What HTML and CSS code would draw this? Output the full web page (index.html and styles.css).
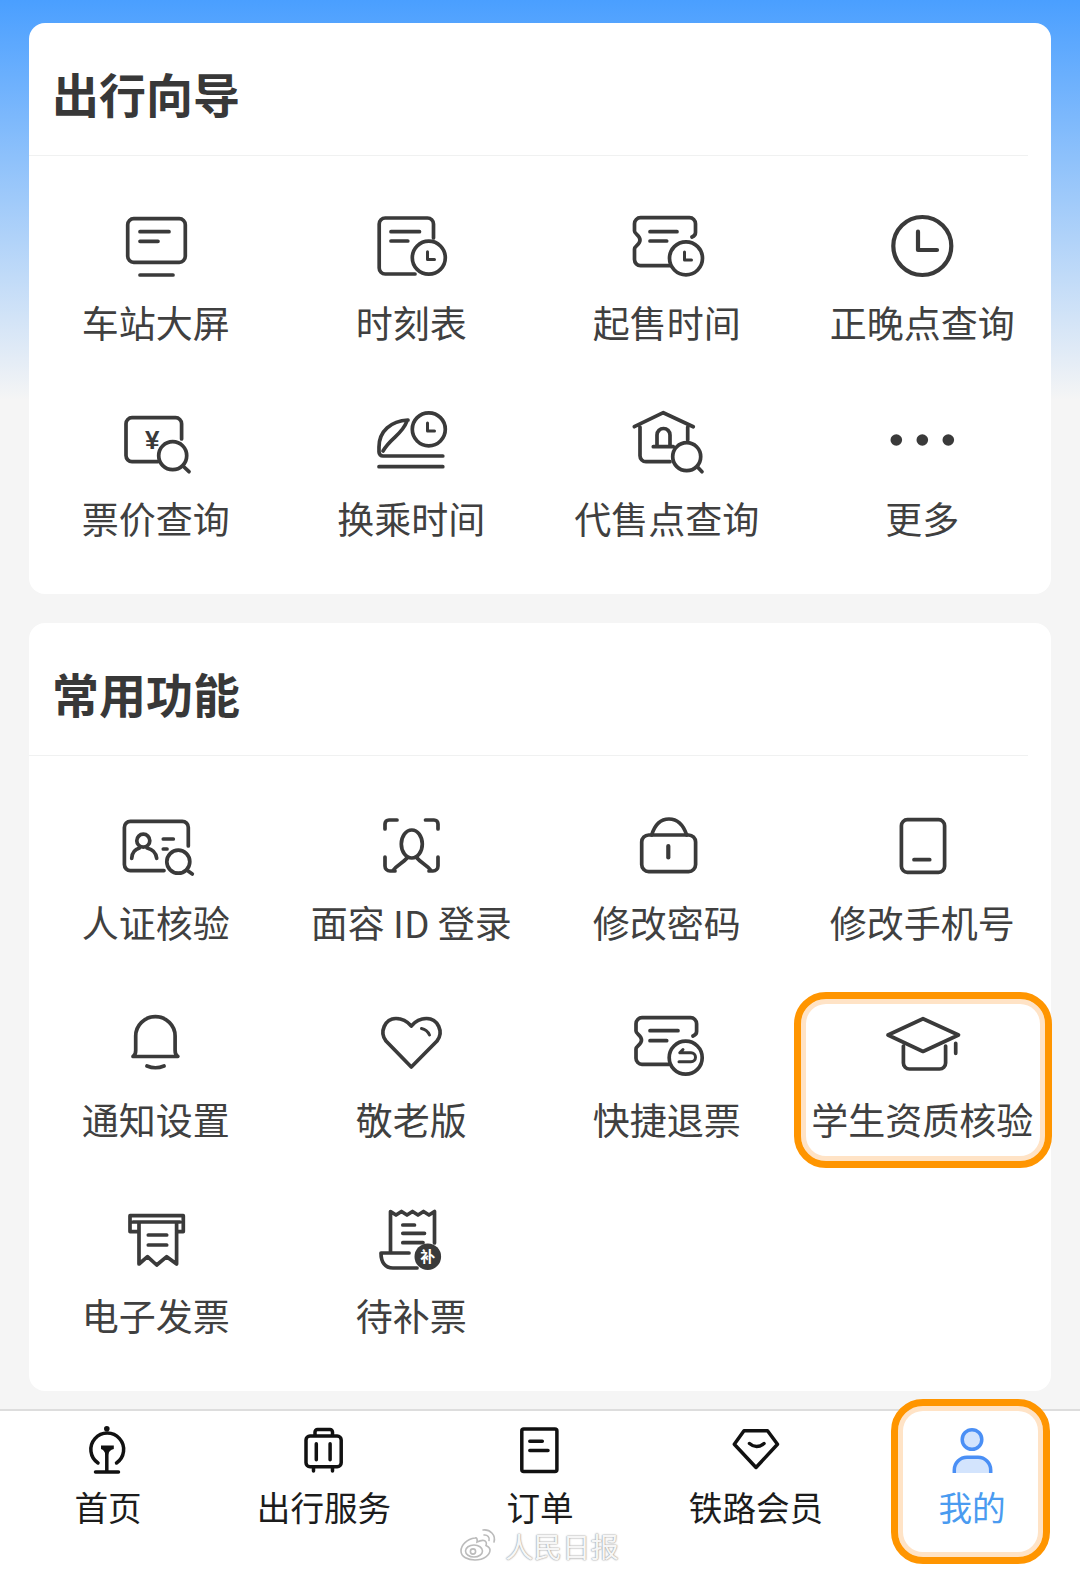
FILE: index.html
```html
<!DOCTYPE html>
<html lang="zh-CN">
<head>
<meta charset="utf-8">
<title>出行向导</title>
<link rel="stylesheet" href="styles.css">
</head>
<body>
<div class="page">
  <main class="main">
    <section class="card">
      <h2 class="card-title">出行向导</h2>
      <div class="grid">
        <div class="item"><svg class="ic" viewBox="0 0 80 80"><rect x="11.700" y="13.700" width="57.600" height="43.600" rx="6"/><path d="M24 26.700H53M24 36.300H42M24 70H57"/></svg><span class="label">车站大屏</span></div>
        <div class="item"><svg class="ic" viewBox="0 0 80 80"><path d="M62.500 33V19a6 6 0 0 0-6-6H14.200a6 6 0 0 0-6 6V63a6 6 0 0 0 6 6H44M20 26.700H48.500M20 36H36.800"/><circle cx="57.800" cy="52.700" r="16.500"/><path class="thin" d="M56.500 46.700V54.500H63.500"/></svg><span class="label">时刻表</span></div>
        <div class="item"><svg class="ic" viewBox="0 0 80 80"><path d="M65 32c2.500-1 3.500-2.500 3.500-4.500V18.700a6 6 0 0 0-6-6H13.500a6 6 0 0 0-6 6V26c0 3 5.500 4 5.500 9s-5.500 6-5.500 9V54.600a6 6 0 0 0 6 6H43M23 26.700H50M23 36H39.700"/><circle cx="59" cy="53.300" r="16.500"/><path class="thin" d="M57.500 47V55H64.500"/></svg><span class="label">起售时间</span></div>
        <div class="item"><svg class="ic" viewBox="0 0 80 80"><circle class="heavy" cx="40.300" cy="41" r="29"/><path class="bold" d="M36 26.700V45H55"/></svg><span class="label">正晚点查询</span></div>

        <div class="item"><svg class="ic" viewBox="0 0 80 80"><path d="M65.600 38V22.700a6 6 0 0 0-6-6H16a6 6 0 0 0-6 6V54.600a6 6 0 0 0 6 6H42"/><text class="yen" x="36.300" y="48" text-anchor="middle">¥</text><circle cx="56.700" cy="54.700" r="14"/><path d="M67.500 65.500L73 70.700"/></svg><span class="label">票价查询</span></div>
        <div class="item"><svg class="ic" viewBox="0 0 80 80"><circle cx="57.800" cy="28.300" r="16.500"/><path class="thin" d="M56.500 22V30H63.500"/><path d="M37 19C20 20 8 30 8 46V51a4 4 0 0 0 4 4H71.800M8 65.700H71.800M36 20C31 34 20 36 12 50"/></svg><span class="label">换乘时间</span></div>
        <div class="item"><svg class="ic" viewBox="0 0 80 80"><path d="M7.300 25.700L36.300 11.700L66.300 25.700M13 26V54.700a6 6 0 0 0 6 6H43M60.700 26V39M26.300 45.700H46.300M30 45V34a6.500 6.500 0 0 1 13 0V45"/><circle cx="59.700" cy="55.700" r="14"/><path d="M70.500 66L75 70.700"/></svg><span class="label">代售点查询</span></div>
        <div class="item"><svg class="ic" viewBox="0 0 80 80"><circle class="f" cx="14.300" cy="39" r="5.800"/><circle class="f" cx="40.300" cy="39" r="5.800"/><circle class="f" cx="66.300" cy="39" r="5.800"/></svg><span class="label">更多</span></div>
      </div>
    </section>

    <section class="card">
      <h2 class="card-title">常用功能</h2>
      <div class="grid grid-wide">
        <div class="item"><svg class="ic" viewBox="0 0 80 80"><path d="M72.300 41V22.400a6 6 0 0 0-6-6H14.400a6 6 0 0 0-6 6V59.600a6 6 0 0 0 6 6H48"/><circle cx="27.300" cy="35.700" r="6.500"/><path d="M15.700 53.300C16 47 20 44 23.500 43M31 43C35 44 40 47 40.700 53.300M47.300 34H57.300M47.300 44H51"/><circle cx="62.300" cy="56.700" r="11.500"/><path d="M70.700 65L76.300 69"/></svg><span class="label">人证核验</span></div>
        <div class="item"><svg class="ic" viewBox="0 0 80 80"><path d="M14 24V19a4 4 0 0 1 4-4H26M54.500 15H63a4 4 0 0 1 4 4V24M14 52V61a5 5 0 0 0 5 5H24M67 52V61a5 5 0 0 1-5 5H58M22 65.500C26 60 32 58 36 53M60 65.500C56 60 50 58 46 53"/><ellipse cx="40.800" cy="39" rx="10.500" ry="14"/></svg><span class="label">面容 ID 登录</span></div>
        <div class="item"><svg class="ic" viewBox="0 0 80 80"><rect x="14.700" y="30" width="53.900" height="36.600" rx="7"/><path d="M24.700 30C28 19 34 14 42 14C50 14 56 19 59.700 30"/><path class="bold" d="M41.300 41V52.500"/></svg><span class="label">修改密码</span></div>
        <div class="item"><svg class="ic" viewBox="0 0 80 80"><rect x="19.400" y="14.700" width="43.200" height="52.600" rx="6"/><path d="M32 54.700H47.700"/></svg><span class="label">修改手机号</span></div>

        <div class="item"><svg class="ic" viewBox="0 0 80 80"><path d="M17 54.500c2-1 2.700-3 2.700-6V34a19.700 19.300 0 0 1 39.400 0V48.500c0 3 .7 5 2.700 6ZM31 64Q39.500 67.500 48 64"/></svg><span class="label">通知设置</span></div>
        <div class="item"><svg class="ic" viewBox="0 0 80 80"><path d="M40.300 65L15 39C8 30 14 16.500 25 16.500C31 16.500 36 19 40.300 24C44.500 19 49.500 16.500 55.500 16.500C67 16.500 73 30 66 39Z"/><path class="thin" d="M50.500 26.500Q56 27.500 58.500 33"/></svg><span class="label">敬老版</span></div>
        <div class="item"><svg class="ic" viewBox="0 0 80 80"><path d="M66 34c2.500-1 3.600-2.500 3.600-4.500V21.700a6 6 0 0 0-6-6H15a6 6 0 0 0-6 6V29c0 3 5.500 4 5.500 9s-5.500 6-5.500 9V56.300a6 6 0 0 0 6 6H42M23 28.700H51M23 38.700H39.700"/><circle cx="58.700" cy="55.700" r="16.500"/><path class="thin" d="M56 47.500L52.800 50.800H64a4.500 4.500 0 0 1 0 9H52"/></svg><span class="label">快捷退票</span></div>
        <div class="item"><svg class="ic" viewBox="0 0 80 80"><path d="M6 33L41 16.700L76.500 33L41 49.500ZM21.400 44V61a6 6 0 0 0 6 6H57.600a6 6 0 0 0 6-6V44M73.700 41.300V51.300"/></svg><span class="label">学生资质核验</span><div class="focus focus-item"></div></div>

        <div class="item"><svg class="ic" viewBox="0 0 80 80"><path d="M23 33.600H14V17.700H67.300V33.600H60.600M17 24H64M23 24V66L31.500 58.700L40.700 67L50.700 58.700L60.600 66V24M32.300 37H50.700M32.300 47H50.700"/></svg><span class="label">电子发票</span></div>
        <div class="item"><svg class="ic" viewBox="0 0 80 80"><path d="M19.500 55V13.500l5.500 3.500l5.500-3.500l5.500 3.500l5.500-3.500l5.500 3.500l5.500-3.500l5.500 3.500l5.500-3.500V45M38 55H10C10 64 14 70 22 70H46M31.800 27H43.500M31.800 35.300H53.500M31.800 44.700H52"/><circle class="f" cx="56.800" cy="58.700" r="13.300"/><text class="bu" x="56.800" y="64" text-anchor="middle">补</text></svg><span class="label">待补票</span></div>
      </div>
    </section>
  </main>

  <nav class="tabs">
    <div class="tab"><svg class="tic" viewBox="0 0 60 60"><path d="M21 41A16.400 16.400 0 1 1 39.500 41M29.800 30V49M18.500 50H41.500"/><circle class="tf" cx="29.800" cy="6.800" r="2.800"/><path class="tf" d="M24 23.500H36.800V27Q32 28 31 33H28.600Q27.500 28 24 27Z"/></svg><span class="tab-label">首页</span></div>
    <div class="tab"><svg class="tic" viewBox="0 0 60 60"><rect x="13" y="14" width="35.200" height="30.800" rx="4"/><path d="M22 13V10a2.500 2.500 0 0 1 2.500-2.500H37a2.500 2.500 0 0 1 2.500 2.500V13M23.300 21.700V37.800M37.100 21.700V37.800M20.500 46V49M39.500 46V49"/></svg><span class="tab-label">出行服务</span></div>
    <div class="tab"><svg class="tic" viewBox="0 0 60 60"><rect x="12.800" y="7" width="35.100" height="42.400" rx="2"/><path d="M20.800 19.300H33.300M20.800 28.500H39"/></svg><span class="tab-label">订单</span></div>
    <div class="tab"><svg class="tic" viewBox="0 0 60 60"><path d="M19 8.800H42.500L52.500 22.300L31 45.500L9.300 22.300ZM24.500 21.500Q31.500 27.500 39 21.500"/></svg><span class="tab-label">铁路会员</span></div>
    <div class="tab tab-active"><svg class="tic tic-active" viewBox="0 0 60 60"><circle cx="30" cy="17.500" r="9.800"/><path d="M12.300 51V48a12.700 12.700 0 0 1 12.700-12.700H36a12.700 12.700 0 0 1 12.700 12.700V51"/></svg><span class="tab-label">我的</span><div class="focus focus-tab"></div></div>
    <div class="mark"><svg class="mark-logo" viewBox="0 0 40 36"><path d="M16 13C8 14 2 20 2 26C2 32 9 35 16 35C25 35 31 30 31 25C31 22 28 21 27 20.500C28 18 27 16 25 15.500C23 15 20 16 18 17C18.500 14.500 18 12.500 16 13Z"/><ellipse cx="15" cy="26" rx="8.500" ry="6"/><circle cx="14" cy="26.500" r="2.600"/><path d="M24 5C31 4 37 10 35 17M25 10C28.500 9.500 31 12.500 30 15.500"/></svg><span class="mark-text">人民日报</span></div>
  </nav>
</div>
</body>
</html>
```

FILE: styles.css
```css
* { box-sizing: border-box; }
html, body { margin: 0; padding: 0; }
body { font-family: "Noto Sans CJK SC", "Noto Sans", sans-serif; }

.page {
  width: 1080px;
  height: 1574px;
  display: flex;
  flex-direction: column;
  overflow: hidden;
  background: linear-gradient(#4a9fff 0, #f5f5f5 400px);
}

.main {
  flex: 1;
  padding: 23px 29px 0;
  display: flex;
  flex-direction: column;
  gap: 29px;
}

.card {
  background: #fff;
  border-radius: 16px;
  padding-bottom: 50px;
}

.card-title {
  margin: 0 23px 0 0;
  padding: 47px 0 39px 23px;
  font-size: 47px;
  line-height: 46px;
  font-weight: 700;
  color: #383838;
  border-bottom: 1px solid #f0f1f1;
}

.grid {
  display: grid;
  grid-template-columns: repeat(4, 1fr);
  row-gap: 53px;
  padding-top: 49px;
  margin: 0 1px 0 -1px;
}
.grid-wide { row-gap: 53.5px; }

.item {
  position: relative;
  display: flex;
  flex-direction: column;
  align-items: center;
  height: 143px;
}

.ic {
  display: block;
  width: 80px;
  height: 80px;
  fill: none;
  stroke: #3a3a3a;
  stroke-width: 3.7;
  stroke-linecap: round;
  stroke-linejoin: round;
}
.ic .thin { stroke-width: 3; }
.ic .bold { stroke-width: 4.2; }
.ic .heavy { stroke-width: 4.2; }
.ic .f { fill: #3a3a3a; stroke: none; }
.ic .yen {
  font-family: "Liberation Sans", sans-serif;
  font-size: 26px;
  font-weight: 700;
  fill: #3a3a3a;
  stroke: none;
}
.ic .bu {
  font-family: "Noto Sans CJK SC", sans-serif;
  font-size: 15px;
  font-weight: 700;
  fill: #fff;
  stroke: none;
}

.label {
  margin-top: 12px;
  font-size: 37px;
  line-height: 50px;
  color: #404040;
  white-space: nowrap;
}

.focus {
  position: absolute;
  border: 7px solid #ff9500;
  border-radius: 32px;
  box-shadow: inset 0 0 0 5px #ffe3c6;
}
.focus-item { top: -10px; bottom: -23px; left: -0.5px; right: -2px; }
.focus-tab { top: -12px; bottom: 10px; left: 27px; right: 30px; }

.tabs {
  position: relative;
  height: 165px;
  display: grid;
  grid-template-columns: repeat(5, 216px);
  background: #fff;
  border-top: 2px solid #ddd;
}

.tab {
  position: relative;
  display: flex;
  flex-direction: column;
  align-items: center;
  padding-top: 11px;
}

.tic {
  display: block;
  width: 60px;
  height: 60px;
  margin-left: -2px;
  fill: none;
  stroke: #111;
  stroke-width: 3.5;
  stroke-linecap: round;
  stroke-linejoin: round;
}
.tic .tf { fill: #111; stroke: none; }
.tic-active { margin-left: 0; stroke: #4a8ff5; fill: #d3e4fd; stroke-linecap: butt; }

.tab-label {
  margin-top: 7px;
  font-size: 33.6px;
  line-height: 36px;
  color: #1c1c1c;
}
.tab-active .tab-label { color: #4a9bf0; }

.mark {
  position: absolute;
  left: 459px;
  top: 117px;
  display: flex;
  align-items: center;
  gap: 6px;
}
.mark-logo {
  display: block;
  width: 40px;
  height: 36px;
  margin-top: -6px;
  fill: #fff;
  stroke: #bbb;
  stroke-width: 1.6;
  stroke-linecap: round;
}
.mark-text {
  font-size: 28.5px;
  line-height: 36px;
  color: #f6f6f6;
  text-shadow: 0 0 2px #999, 0 0 1px #999;
}
```
